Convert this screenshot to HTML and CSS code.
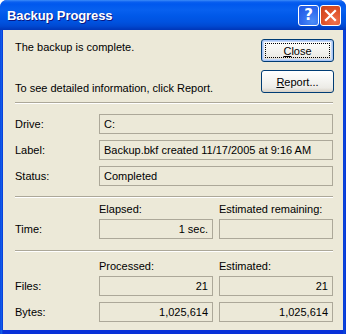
FILE: index.html
```html
<!DOCTYPE html>
<html>
<head>
<meta charset="utf-8">
<link rel="stylesheet" href="styles.css">
</head>
<body>
<div class="window">
  <div class="titlebar">
    <span class="title">Backup Progress</span>
    <div class="caption-buttons">
      <span class="cap-btn help">?</span>
      <span class="cap-btn close">
        <svg width="13" height="13" viewBox="0 0 13 13"><path d="M2 2 L11 11 M11 2 L2 11" stroke="#fff" stroke-width="2.2" stroke-linecap="square"/></svg>
      </span>
    </div>
  </div>
  <div class="client">
    <div class="top">
      <div class="messages">
        <div class="msg first">The backup is complete.</div>
        <div class="msg second">To see detailed information, click Report.</div>
      </div>
      <div class="buttons">
        <button class="btn default"><span class="focus"><u>C</u>lose</span></button>
        <button class="btn"><u>R</u>eport...</button>
      </div>
    </div>
    <div class="sep"></div>
    <div class="info">
      <div class="lbl">Drive:</div><div class="field">C:</div>
      <div class="lbl">Label:</div><div class="field">Backup.bkf created 11/17/2005 at 9:16 AM</div>
      <div class="lbl">Status:</div><div class="field">Completed</div>
    </div>
    <div class="sep"></div>
    <div class="grid3 time">
      <div></div><div class="head">Elapsed:</div><div class="head">Estimated remaining:</div>
      <div class="lbl">Time:</div><div class="field num">1 sec.</div><div class="field num"></div>
    </div>
    <div class="sep"></div>
    <div class="grid3 counts">
      <div></div><div class="head">Processed:</div><div class="head">Estimated:</div>
      <div class="lbl">Files:</div><div class="field num">21</div><div class="field num">21</div>
      <div class="lbl">Bytes:</div><div class="field num">1,025,614</div><div class="field num">1,025,614</div>
    </div>
  </div>
</div>
</body>
</html>
```
FILE: styles.css
```css
* { box-sizing: border-box; }
html, body { margin: 0; padding: 0; background: #fff; }
body {
  font-family: "Liberation Sans", Arial, sans-serif;
  font-size: 11px;
  color: #000;
}
.window {
  width: 346px;
  height: 334px;
  display: flex;
  flex-direction: column;
  background: linear-gradient(to right, #0831d9 0, #166aee 1px, #0a50e0 2px, #0831d9 3px, #0831d9 343px, #0a4cd8 344px, #0831d9 346px);
  border-radius: 7px 7px 0 0;
  overflow: hidden;
}
.titlebar {
  height: 30px;
  flex: none;
  display: flex;
  align-items: center;
  justify-content: space-between;
  padding: 0 5px 0 7px;
  background: linear-gradient(to bottom, #3c8cf8 0, #0a5ff0 2px, #0058ee 4px, #0760ef 10px, #0058e8 16px, #0052df 22px, #0049d2 26px, #003fc4 28px, #0036b8 30px);
}
.title {
  color: #fff;
  font-family: "Liberation Sans", Arial, sans-serif;
  font-weight: bold;
  font-size: 13px;
  letter-spacing: -0.1px;
  text-shadow: 1px 1px 0 #0a1883;
  padding-top: 1px;
}
.caption-buttons { display: flex; gap: 1px; padding-top: 1px; }
.cap-btn {
  width: 21px;
  height: 21px;
  border: 1px solid #fff;
  border-radius: 3px;
  display: flex;
  align-items: center;
  justify-content: center;
  color: #fff;
}
.help {
  background: radial-gradient(circle at 70% 80%, #4d8ef8 0, #2f6bef 50%, #1e55e0 100%);
  font-family: "DejaVu Sans", sans-serif;
  font-weight: bold;
  font-size: 15px;
  line-height: 1;
}
.close {
  background: radial-gradient(circle at 70% 80%, #f07350 0, #e0532a 50%, #c8401a 100%);
}
.client {
  flex: 1;
  margin: 0 3px 4px 3px;
  background: #ece9d8;
  padding: 0 10px 0 12px;
}
.top {
  display: flex;
  justify-content: space-between;
  height: 72px;
  padding-top: 9px;
}
.msg { line-height: 13px; white-space: nowrap; }
.msg.first { margin-top: 2px; }
.msg.second { margin-top: 28px; }
.buttons { display: flex; flex-direction: column; gap: 8px; margin-right: -1px; }
.btn {
  width: 73px;
  height: 23px;
  border: 1px solid #003c74;
  border-radius: 3px;
  background: linear-gradient(to bottom, #fff 0, #f6f6f3 40%, #ecebe6 80%, #d6d0c5 100%);
  font-family: "Liberation Sans", Arial, sans-serif;
  font-size: 11px;
  color: #000;
  padding: 0;
  display: flex;
  align-items: center;
  justify-content: center;
}
.btn.default {
  box-shadow: inset 0 0 0 1px #a7c4f5, inset 0 0 0 2px #c4d8f8;
}
.btn .focus {
  display: flex;
  align-items: center;
  justify-content: center;
  width: 65px;
  height: 15px;
  border: 1px dotted #000;
}
.sep {
  height: 2px;
  border-top: 1px solid #aca899;
  border-bottom: 1px solid #fff;
}
.info {
  display: grid;
  grid-template-columns: 84px 234px;
  row-gap: 6px;
  padding: 10px 0 10px;
  align-items: center;
}
.lbl { line-height: 13px; }
.field {
  height: 20px;
  border: 1px solid #aca899;
  background: #ece9d8;
  padding: 0 4px;
  line-height: 18px;
  white-space: nowrap;
  overflow: hidden;
}
.field.num { text-align: right; }
.grid3 {
  display: grid;
  grid-template-columns: 78px 114px 114px;
  column-gap: 6px;
  row-gap: 6px;
  align-items: center;
}
.grid3 .head { line-height: 13px; margin-bottom: -3px; }
.time { padding: 5px 0 11px; }
.counts { padding: 8px 0 0; }
```
